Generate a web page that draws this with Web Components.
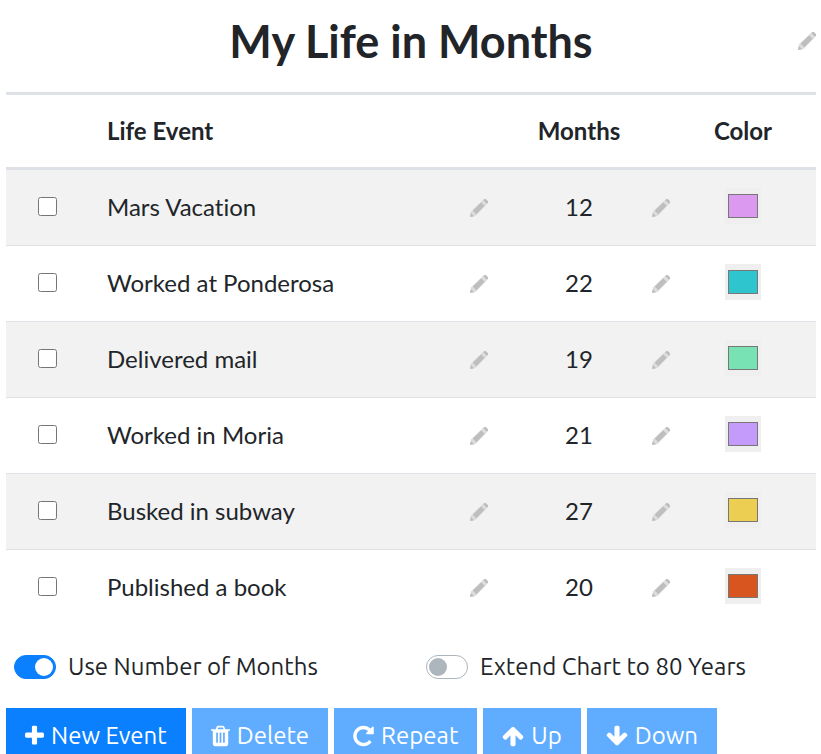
<!DOCTYPE html>
<html lang="en">
<head>
<meta charset="utf-8">
<title>My Life in Months</title>
<style>
html { scrollbar-width: none; }
body { margin: 0 5px 0 6px; background: #fff; color: #212529; font: 24px/36px Lato, sans-serif; font-variant-ligatures: no-common-ligatures; }
</style>
</head>
<body>
<life-app></life-app>
<script>
class EditPencil extends HTMLElement {
  constructor() {
    super();
    this.attachShadow({ mode: 'open' }).innerHTML = `
      <style>
        :host { display: block; width: 18px; height: 18px; margin: 0 auto; }
        button { display: block; width: 18px; height: 18px; padding: 0; border: 0; background: none; cursor: pointer; }
        svg { display: block; }
      </style>
      <button type="button" aria-label="Edit">
        <svg width="18" height="18" viewBox="0 0 18 18">
          <path fill="#dcdcdc" d="M0 18l1-5.500L12.500 1.200l4.300 4.300L5.500 17z"/>
          <path fill="#bebebe" d="M2.800 11.600L11.200 3.400l3.400 3.400-8.400 8.400z"/>
          <path fill="#bdbdbd" d="M0 18l.8-4 3.200 3.200zM13 1.200L14.200 0h1.600L18 2.200v1.600L16.800 5z"/>
        </svg>
      </button>`;
  }
}
customElements.define('edit-pencil', EditPencil);

class ColorSwatch extends HTMLElement {
  connectedCallback() {
    this.attachShadow({ mode: 'open' }).innerHTML = `
      <style>
        :host { display: block; width: 36px; height: 36px; margin: 0 auto; }
        input { display: block; box-sizing: border-box; width: 36px; height: 36px; margin: 0; padding: 2px 1px; border: 0; background: #efefef; }
      </style>
      <input type="color" aria-label="Color" value="${this.getAttribute('value')}">`;
  }
}
customElements.define('color-swatch', ColorSwatch);

class EventTable extends HTMLElement {
  connectedCallback() {
    const events = [
      ['Mars Vacation', 12, '#db9af0'], ['Worked at Ponderosa', 22, '#2fc5cf'],
      ['Delivered mail', 19, '#78e2b4'], ['Worked in Moria', 21, '#c49bfa'],
      ['Busked in subway', 27, '#ebce52'], ['Published a book', 20, '#d8551f']
    ];
    this.attachShadow({ mode: 'open' }).innerHTML = `
      <style>
        :host { display: block; }
        table { width: 100%; table-layout: fixed; border-collapse: separate; border-spacing: 0; }
        th, td { box-sizing: border-box; padding: 0; text-align: center; vertical-align: middle; }
        th { height: 78px; border-top: 3px solid #dee2e6; border-bottom: 3px solid #dee2e6; font-weight: 700; }
        td { height: 76px; padding-bottom: 2px; border-bottom: 1px solid #dee2e6; }
        td.pencil { padding-bottom: 0; }
        td.color { padding-bottom: 4px; }
        tbody tr:nth-child(odd) { background: #f2f2f2; }
        tbody tr:last-child td { border-bottom-color: transparent; }
        th.name, td.name { padding-left: 18px; text-align: left; }
        input { display: block; width: 19px; height: 19px; margin: 0 auto; }
        .check { width: 83px; } .edit { width: 54px; } .wide { width: 146px; } .slim { width: 18px; }
      </style>
      <table>
        <colgroup><col class="check"><col><col class="edit"><col class="wide"><col class="slim"><col class="wide"></colgroup>
        <thead><tr><th></th><th class="name">Life Event</th><th></th><th>Months</th><th></th><th>Color</th></tr></thead>
        <tbody>${events.map(([name, months, color]) => `
          <tr>
            <td><input type="checkbox" aria-label="${name}"></td>
            <td class="name">${name}</td>
            <td class="pencil"><edit-pencil></edit-pencil></td>
            <td>${months}</td>
            <td class="pencil"><edit-pencil></edit-pencil></td>
            <td class="color"><color-swatch value="${color}"></color-swatch></td>
          </tr>`).join('')}
        </tbody>
      </table>`;
  }
}
customElements.define('event-table', EventTable);

class ToggleSwitch extends HTMLElement {
  connectedCallback() {
    this.attachShadow({ mode: 'open' }).innerHTML = `
      <style>
        :host { display: block; }
        label { display: flex; align-items: center; gap: 12px; white-space: nowrap; }
        input { appearance: none; flex: none; box-sizing: border-box; display: flex; align-items: center; width: 42px; height: 24px; margin: 0; padding: 0 2px; border: 1px solid #adb5bd; border-radius: 12px; background: #fff; }
        input::before { content: ""; width: 18px; height: 18px; border-radius: 50%; background: #adb5bd; }
        input:checked { justify-content: flex-end; border-color: #0a80ff; background: #0a80ff; }
        input:checked::before { background: #fff; }
      </style>
      <label><input type="checkbox" role="switch" ${this.hasAttribute('on') ? 'checked' : ''}><span><slot></slot></span></label>`;
  }
}
customElements.define('toggle-switch', ToggleSwitch);

const ICONS = {
  plus: ['192 0 1408 1792', 19, 'M1600 736v192q0 40-28 68t-68 28h-416v416q0 40-28 68t-68 28h-192q-40 0-68-28t-28-68v-416h-416q-40 0-68-28t-28-68v-192q0-40 28-68t68-28h416v-416q0-40 28-68t68-28h192q40 0 68 28t28 68v416h416q40 0 68 28t28 68z'],
  trash: ['192 0 1408 1792', 19, 'M704 1376v-704q0-14-9-23t-23-9h-64q-14 0-23 9t-9 23v704q0 14 9 23t23 9h64q14 0 23-9t9-23zm256 0v-704q0-14-9-23t-23-9h-64q-14 0-23 9t-9 23v704q0 14 9 23t23 9h64q14 0 23-9t9-23zm256 0v-704q0-14-9-23t-23-9h-64q-14 0-23 9t-9 23v704q0 14 9 23t23 9h64q14 0 23-9t9-23zm-544-992h448l-48-117q-7-9-17-11h-317q-10 2-17 11zm928 32v64q0 14-9 23t-23 9h-96v948q0 83-47 143.500t-113 60.500h-832q-66 0-113-58.500t-47-141.500v-952h-96q-14 0-23-9t-9-23v-64q0-14 9-23t23-9h309l70-167q15-37 54-63t79-26h320q40 0 79 26t54 63l70 167h309q14 0 23 9t9 23z'],
  repeat: ['128 0 1536 1792', 21, 'M1664 256v448q0 26-19 45t-45 19h-448q-42 0-59-40-17-39 14-69l138-138q-148-137-349-137-104 0-198.500 40.500t-163.500 109.500-109.500 163.500-40.500 198.500 40.500 198.500 109.500 163.500 163.500 109.500 198.500 40.500q119 0 225-52t179-147q7-10 23-12 15 0 25 9l137 138q9 8 9.500 20.500t-7.500 22.500q-109 132-264 204.500t-327 72.500q-156 0-298-61t-245-164-164-245-61-298 61-298 164-245 245-164 298-61q147 0 284.500 55.500t244.500 156.500l130-129q29-31 70-14 39 17 39 59z'],
  up: ['64 0 1664 1792', 22, 'M1675 971q0 51-37 90l-75 75q-38 38-91 38-54 0-90-38l-294-293v704q0 52-37.500 84.500t-90.500 32.500h-128q-53 0-90.500-32.500t-37.500-84.500v-704l-294 293q-36 38-90 38t-90-38l-75-75q-38-38-38-90 0-53 38-91l651-651q35-37 90-37 54 0 91 37l651 651q37 39 37 91z'],
  down: ['64 0 1664 1792', 22, 'M1675 832q0 53-37 90l-651 652q-39 37-91 37-53 0-90-37l-651-652q-38-36-38-90 0-53 38-91l74-75q39-37 91-37 53 0 90 37l294 294v-704q0-52 38-90t90-38h128q52 0 90 38t38 90v704l294-294q37-37 90-37 52 0 91 37l75 75q37 39 37 91z']
};

class ActionButton extends HTMLElement {
  connectedCallback() {
    const [box, width, path] = ICONS[this.getAttribute('icon')];
    this.attachShadow({ mode: 'open' }).innerHTML = `
      <style>
        :host { display: block; }
        button { display: flex; align-items: center; gap: 7px; height: 56px; padding: 0 19px; border: 0; background: #0a80ff; color: #fff; font: inherit; white-space: nowrap; }
        button:disabled { background: #60adff; }
        svg { flex: none; fill: currentColor; }
      </style>
      <button type="button" ${this.hasAttribute('disabled') ? 'disabled' : ''}>
        <svg width="${width}" height="24" viewBox="${box}" aria-hidden="true"><path d="${path}"/></svg><span><slot></slot></span>
      </button>`;
  }
}
customElements.define('action-button', ActionButton);

class LifeApp extends HTMLElement {
  constructor() {
    super();
    this.attachShadow({ mode: 'open' }).innerHTML = `
      <style>
        :host { display: block; }
        header { display: grid; grid-template-columns: 18px 1fr 18px; align-items: center; height: 82px; padding-bottom: 10px; }
        h1 { grid-column: 2; margin: 0; text-align: center; font-size: 45px; line-height: 54px; font-weight: 700; }
        .switches, .actions { font-family: Ubuntu, "Noto Sans", sans-serif; font-size: 24px; }
        .switches { display: grid; grid-template-columns: 412px 1fr; padding: 23px 8px; }
        .actions { display: flex; gap: 6px; }
      </style>
      <header><h1>My Life in Months</h1><edit-pencil></edit-pencil></header>
      <event-table></event-table>
      <div class="switches">
        <toggle-switch on>Use Number of Months</toggle-switch>
        <toggle-switch>Extend Chart to 80 Years</toggle-switch>
      </div>
      <div class="actions">
        <action-button icon="plus">New Event</action-button>
        <action-button icon="trash" disabled>Delete</action-button>
        <action-button icon="repeat" disabled>Repeat</action-button>
        <action-button icon="up" disabled>Up</action-button>
        <action-button icon="down" disabled>Down</action-button>
      </div>`;
  }
}
customElements.define('life-app', LifeApp);
</script>
</body>
</html>
